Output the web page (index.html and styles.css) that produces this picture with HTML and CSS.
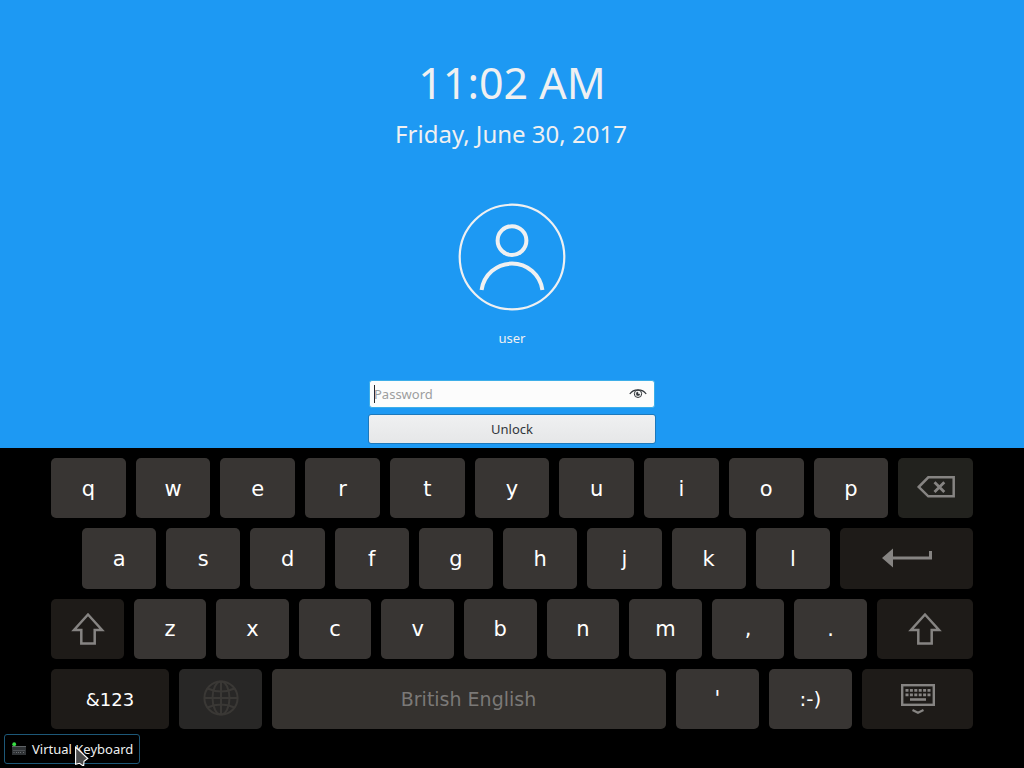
FILE: index.html
```html
<!DOCTYPE html>
<html lang="en">
<head>
<meta charset="utf-8">
<title>Lock Screen</title>
<link rel="stylesheet" href="styles.css">
</head>
<body>
<main class="lock">
  <div class="time">11:02 AM</div>
  <div class="date">Friday, June 30, 2017</div>
  <svg class="avatar" width="108" height="108" viewBox="0 0 108 108" fill="none" stroke="#eff0f1">
    <circle cx="54" cy="54" r="52.3" stroke-width="2.200"/>
    <circle cx="54" cy="37.600" r="14.400" stroke-width="4"/>
    <path d="M23.600 87A30.700 30.700 0 0 1 84.400 87" stroke-width="4"/>
  </svg>
  <div class="user">user</div>
  <div class="field">
    <span class="caret"></span><span class="placeholder">Password</span>
    <svg class="eye" width="18" height="12" viewBox="0 0 18 12" fill="none" stroke="#31363b">
      <path d="M.8 6C4.500 .4 13.500 .4 17.200 6" stroke-width="1.200"/>
      <circle cx="9" cy="5.800" r="3.700" stroke-width="1"/>
      <path d="M9 4A1.900 1.900 0 1 0 10.900 6H9Z" fill="#31363b" stroke-width=".4"/>
    </svg>
  </div>
  <button class="unlock">Unlock</button>
</main>

<section class="keyboard">
  <div class="row row-q">
    <div class="key">q</div><div class="key">w</div><div class="key">e</div><div class="key">r</div><div class="key">t</div><div class="key">y</div><div class="key">u</div><div class="key">i</div><div class="key">o</div><div class="key">p</div>
    <div class="key back">
      <svg width="38" height="22" viewBox="0 0 38 22" fill="none" stroke="#868482" stroke-width="2.500">
        <path d="M1.700 11 11.300 1.300H36.700V20.300H11.300Z"/><path d="M17.500 6.200 27.300 16M27.300 6.200 17.500 16" stroke-width="2.800"/>
      </svg>
    </div>
  </div>
  <div class="row row-a">
    <div class="key">a</div><div class="key">s</div><div class="key">d</div><div class="key">f</div><div class="key">g</div><div class="key">h</div><div class="key">j</div><div class="key">k</div><div class="key">l</div>
    <div class="key dark enter">
      <svg width="50" height="20" viewBox="0 0 50 20" fill="#868482">
        <path d="M0 10 11 .5V8.500H47V3H50V11.500H11V19.500Z"/>
      </svg>
    </div>
  </div>
  <div class="row row-z">
    <div class="key dark shift-left">
      <svg width="34" height="34" viewBox="0 0 34 34" fill="none" stroke="#868482" stroke-width="2.500">
        <path d="M17 2.500 3 18H10.300V31.600H23.700V18H31Z"/>
      </svg>
    </div>
    <div class="key">z</div><div class="key">x</div><div class="key">c</div><div class="key">v</div><div class="key">b</div><div class="key">n</div><div class="key">m</div><div class="key">,</div><div class="key">.</div>
    <div class="key dark">
      <svg width="34" height="34" viewBox="0 0 34 34" fill="none" stroke="#868482" stroke-width="2.500">
        <path d="M17 2.500 3 18H10.300V31.600H23.700V18H31Z"/>
      </svg>
    </div>
  </div>
  <div class="row row-space">
    <div class="key dark symbols">&amp;123</div>
    <div class="key globe">
      <svg width="36" height="36" viewBox="0 0 36 36" fill="none" stroke="#3a3835" stroke-width="2">
        <circle cx="18" cy="18" r="16.600"/><ellipse cx="18" cy="18" rx="8.500" ry="16.600"/>
        <path d="M18 1V35M1 18H35M4.500 8.500Q18 14.500 31.500 8.500M4.500 27.500Q18 21.500 31.500 27.500"/>
      </svg>
    </div>
    <div class="key space">British English</div>
    <div class="key quote">'</div>
    <div class="key smile">:-)</div>
    <div class="key dark hide">
      <svg width="34" height="31" viewBox="0 0 34 31" fill="none" stroke="#868482">
        <rect x="1.200" y="1.200" width="31.600" height="19.600" stroke-width="2.400"/>
        <path d="M4.500 6.300H30M4.500 10.800H30" stroke-width="2.800" stroke-dasharray="3 1.400"/>
        <path d="M9 15.500H25" stroke-width="2.600"/>
        <path d="M11.500 26 17 28.800 22.500 26" stroke-width="2.200"/>
      </svg>
    </div>
  </div>
</section>

<footer class="bar">
  <div class="toggle">
    <svg width="14" height="13" viewBox="0 0 14 13">
      <rect y="4" width="14" height="9" fill="#303336"/><path d="M0 4.500H14" stroke="#606467"/>
      <path d="M1.500 8.500H13M1.500 10.500H3M4 10.500H10M11 10.500H12.500" stroke="#6b6f72" stroke-width="1" stroke-dasharray="1 1"/>
      <circle cx="2.200" cy="2.200" r="1.900" fill="#38df45"/>
    </svg>
    <span>Virtual Keyboard</span>
  </div>
</footer>
<svg class="pointer" width="14" height="22" viewBox="0 0 14 22">
  <path d="M.6 1.200V18.300L4.500 17.300 7.500 19.400H8.700L9 15.300 12.800 12.500Z" fill="#4b4b4b" stroke="#fff" stroke-width="1.100"/>
</svg>
</body>
</html>
```

FILE: styles.css
```css
* { box-sizing: border-box; }
body {
  margin: 0;
  width: 1024px;
  height: 768px;
  overflow: hidden;
  display: flex;
  flex-direction: column;
  background: #000;
  font-family: "Noto Sans", sans-serif;
  font-size: 13px;
}
svg { display: block; flex: none; }

.lock {
  height: 448px;
  padding-top: 53px;
  display: flex;
  flex-direction: column;
  align-items: center;
  background: #1d99f3;
  color: #eff0f1;
}
.time { height: 60px; line-height: 60px; font-size: 43px; white-space: nowrap; }
.date { height: 34px; margin-top: 4px; padding-right: 2px; line-height: 34px; font-size: 24px; white-space: nowrap; }
.avatar { margin-top: 52px; }
.user { height: 18px; margin-top: 18px; line-height: 18px; }
.field {
  width: 286px;
  height: 28px;
  margin-top: 33px;
  padding: 0 7px 0 4px;
  display: flex;
  align-items: center;
  background: #fcfcfc;
  border: 1px solid #3daee9;
  border-radius: 3px;
}
.caret { width: 1px; height: 18px; margin-right: -1px; background: #232629; }
.placeholder { color: #9c9e9f; }
.eye { margin-left: auto; }
.unlock {
  width: 288px;
  height: 30px;
  margin-top: 6px;
  padding: 0;
  border: 1px solid #1c78bb;
  border-radius: 3px;
  background: linear-gradient(#eff0f1, #e6e7e8);
  color: #31363b;
  font: 13px "Noto Sans", sans-serif;
}

.keyboard {
  height: 281px;
  padding: 10px 51px 0;
  display: grid;
  grid-template-rows: repeat(4, 60.25px);
  gap: 10px;
  color: #fff;
  font-family: "DejaVu Sans", sans-serif;
  font-size: 21px;
}
.row { display: grid; gap: 10px; }
.row-q { grid-template-columns: repeat(11, 1fr); }
.row-a { padding-left: 31px; grid-template-columns: repeat(9, 1fr) 133px; }
.row-z { grid-template-columns: repeat(10, 1fr) 96px; }
.row-space { grid-template-columns: 118px 83px 394px 83px 83px 111px; }
.key {
  padding-top: 1.5px;
  display: flex;
  align-items: center;
  justify-content: center;
  background: #383533;
  border-radius: 5px;
}
.dark { background: #1e1b18; padding-top: 0; }
.back { background: #22221e; padding-top: 0; padding-bottom: 2px; }
.globe { background: #282726; padding: 0 0 1px; }
.space { background: #35322f; color: #7b7977; font-size: 19px; padding: 0 1px 0 0; }
.symbols { font-size: 18px; padding-top: 1px; }
.quote { padding-top: 1px; }
.smile { font-size: 20px; padding-top: 0; }
.enter { padding-left: 2px; }
.shift-left { padding-left: 1px; }
.hide { padding-top: 1px; }

.bar { height: 39px; padding: 5px 4px; display: flex; }
.toggle {
  width: 136px;
  height: 30px;
  padding-left: 7px;
  display: flex;
  align-items: center;
  gap: 6px;
  border: 1px solid #1d5878;
  border-radius: 3px;
  color: #eff0f1;
  white-space: nowrap;
}
.toggle svg { margin-top: -1px; }
.pointer { position: absolute; left: 75px; top: 746px; }
```
